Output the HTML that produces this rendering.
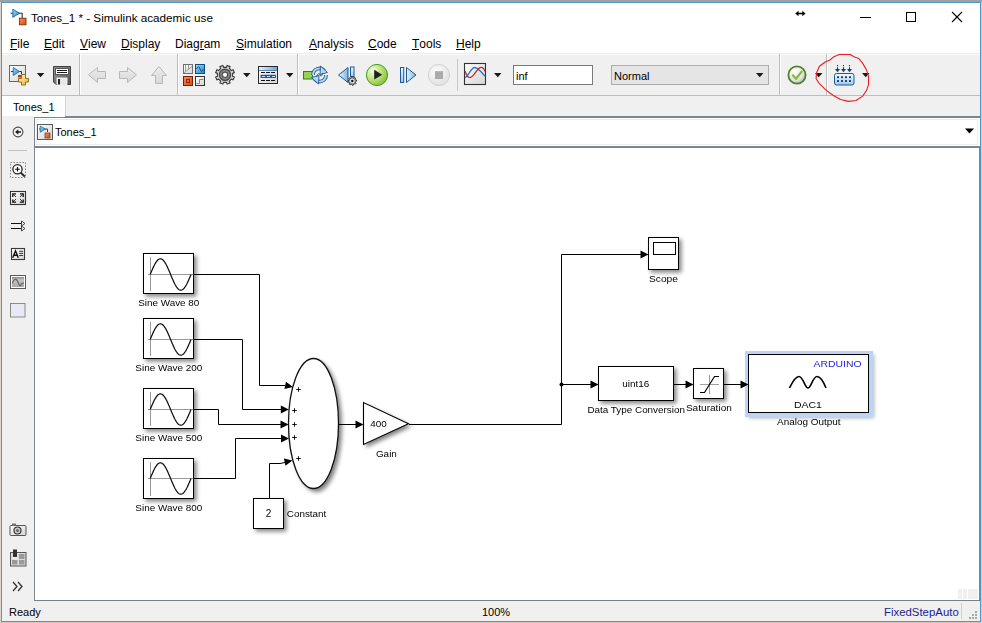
<!DOCTYPE html>
<html><head><meta charset="utf-8">
<style>
*{margin:0;padding:0;box-sizing:border-box}
html,body{width:982px;height:623px;overflow:hidden;background:#a8a8a8;font-family:"Liberation Sans",sans-serif;color:#000}
.a{position:absolute}
.t{position:absolute;white-space:nowrap;line-height:1}
.menu{font-size:12px;color:#000;top:38px}
.menu u{text-decoration:none;border-bottom:1px solid #000;display:inline-block;line-height:10px;height:11px}
</style></head><body>
<!-- background strip -->
<div class="a" style="left:0;top:0;width:982px;height:2px;background:#a0a0a0"></div>
<div class="a" style="left:0;top:2px;width:1px;height:621px;background:#dbd5d2"></div>
<div class="a" style="left:981px;top:2px;width:1px;height:621px;background:#d3ccc8"></div>
<div class="a" style="left:0;top:622px;width:982px;height:1px;background:#cfc8c5"></div>
<!-- window -->
<div class="a" style="left:1px;top:2px;width:980px;height:620px;border:1px solid #4f97c6;background:#fff"></div>
<!-- title -->
<div class="t" style="left:31px;top:12px;font-size:11.7px;color:#000">Tones_1 * - Simulink academic use</div>
<!-- menu -->
<div class="t menu" style="left:10px"><u>F</u>ile</div>
<div class="t menu" style="left:44px"><u>E</u>dit</div>
<div class="t menu" style="left:80px"><u>V</u>iew</div>
<div class="t menu" style="left:121px"><u>D</u>isplay</div>
<div class="t menu" style="left:175px">Diag<u>r</u>am</div>
<div class="t menu" style="left:236px"><u>S</u>imulation</div>
<div class="t menu" style="left:309px"><u>A</u>nalysis</div>
<div class="t menu" style="left:368px"><u>C</u>ode</div>
<div class="t menu" style="left:412px"><u>T</u>ools</div>
<div class="t menu" style="left:456px"><u>H</u>elp</div>
<!-- toolbar -->
<div class="a" style="left:2px;top:53px;width:978px;height:43px;background:#f0f0f0;border-top:1px solid #ececec;border-bottom:1px solid #bdbdbd"></div>
<div class="a" style="left:2px;top:54px;width:978px;height:1px;background:#fafafa"></div>
<!-- separators -->
<div class="a" style="left:79px;top:54px;width:1px;height:41px;background:#bdbdbd"></div>
<div class="a" style="left:80px;top:54px;width:1px;height:41px;background:#fff"></div>
<div class="a" style="left:177px;top:54px;width:1px;height:41px;background:#bdbdbd"></div>
<div class="a" style="left:178px;top:54px;width:1px;height:41px;background:#fff"></div>
<div class="a" style="left:297px;top:54px;width:1px;height:41px;background:#bdbdbd"></div>
<div class="a" style="left:298px;top:54px;width:1px;height:41px;background:#fff"></div>
<div class="a" style="left:457px;top:59px;width:1px;height:32px;background:#c8c8c8"></div>
<div class="a" style="left:779px;top:54px;width:1px;height:41px;background:#bdbdbd"></div>
<div class="a" style="left:780px;top:54px;width:1px;height:41px;background:#fff"></div>
<div class="a" style="left:826px;top:54px;width:1px;height:41px;background:#bdbdbd"></div>
<div class="a" style="left:827px;top:54px;width:1px;height:41px;background:#fff"></div>
<!-- sim time box -->
<div class="a" style="left:513px;top:65px;width:80px;height:20px;background:#fff;border:1px solid #7a7a7a"></div>
<div class="t" style="left:516px;top:71px;font-size:11px">inf</div>
<div class="a" style="left:611px;top:65px;width:158px;height:20px;background:#e5e5e5;border:1px solid #adadad"></div>
<div class="t" style="left:614px;top:71px;font-size:11px">Normal</div>
<!-- tab strip -->
<div class="a" style="left:2px;top:96px;width:978px;height:21px;background:#f0f0f0"></div>
<div class="a" style="left:2px;top:96px;width:63px;height:21px;background:#fff"></div>
<div class="a" style="left:65px;top:96px;width:1px;height:20px;background:#d4d4d4"></div>
<div class="t" style="left:13px;top:102px;font-size:11px">Tones_1</div>
<!-- left toolbar -->
<div class="a" style="left:2px;top:117px;width:32px;height:484px;background:#f0f0f0"></div>
<div class="a" style="left:8px;top:150px;width:19px;height:1px;background:#c0c0c0"></div>
<!-- address bar -->
<div class="a" style="left:34px;top:116px;width:946px;height:32px;background:#7f858c"></div>
<div class="a" style="left:35px;top:118px;width:945px;height:28px;background:#fff"></div>
<div class="a" style="left:36px;top:119px;width:942px;height:26px;border:1px solid #ececec"></div>
<div class="a" style="left:2px;top:116px;width:32px;height:1px;background:#f0f0f0"></div>
<div class="a" style="left:34px;top:116px;width:31px;height:1px;background:#fff"></div>
<div class="t" style="left:55px;top:127px;font-size:11px">Tones_1</div>
<!-- canvas -->
<div class="a" style="left:34px;top:148px;width:946px;height:453px;background:#fff;border-left:1px solid #7f858c;border-right:1px solid #7f858c;border-bottom:1px solid #7a8088"></div>
<div class="a" style="left:958px;top:589px;width:4px;height:10px;background:#f0f0f0"></div>
<div class="a" style="left:963px;top:589px;width:4px;height:10px;background:#f0f0f0"></div>
<div class="a" style="left:968px;top:589px;width:10px;height:10px;background:#f0f0f0"></div>
<!-- status bar -->
<div class="a" style="left:2px;top:601px;width:978px;height:20px;background:#f0f0f0"></div>
<div class="t" style="left:9px;top:607px;font-size:11px">Ready</div>
<div class="t" style="left:482px;top:607px;font-size:11px">100%</div>
<div class="t" style="left:884px;top:607px;font-size:11.4px;color:#1c1c8c">FixedStepAuto</div>
<div class="a" style="left:961px;top:603px;width:1px;height:16px;background:#d0d0d0"></div>

<svg class="a" style="left:0;top:0;font-family:'Liberation Sans',sans-serif" width="982" height="623" viewBox="0 0 982 623">
<defs><filter id="bl" x="-30%" y="-30%" width="160%" height="160%"><feGaussianBlur stdDeviation="2.3"/></filter></defs>
<rect x="145.5" y="255.5" width="51.1" height="41.1" fill="#000" opacity="0.47" filter="url(#bl)"/>
<rect x="143.5" y="253.5" width="50" height="40" fill="#fff" stroke="#000" stroke-width="1"/>
<path d="M150.5 257 V291" stroke="#9a9a9a" stroke-width="1" fill="none"/>
<path d="M148 274.5 H193" stroke="#9a9a9a" stroke-width="1" fill="none"/>
<path d="M150.20 274.50 L150.71 273.27 L151.22 272.04 L151.73 270.83 L152.24 269.65 L152.75 268.49 L153.26 267.37 L153.77 266.30 L154.28 265.27 L154.79 264.30 L155.30 263.40 L155.81 262.56 L156.32 261.80 L156.83 261.11 L157.34 260.51 L157.85 260.00 L158.36 259.57 L158.87 259.23 L159.38 258.99 L159.89 258.85 L160.40 258.80 L160.91 258.85 L161.42 258.99 L161.93 259.23 L162.44 259.57 L162.95 260.00 L163.46 260.51 L163.97 261.11 L164.48 261.80 L164.99 262.56 L165.50 263.40 L166.01 264.30 L166.52 265.27 L167.03 266.30 L167.54 267.37 L168.05 268.49 L168.56 269.65 L169.07 270.83 L169.58 272.04 L170.09 273.27 L170.60 274.50 L171.11 275.73 L171.62 276.96 L172.13 278.17 L172.64 279.35 L173.15 280.51 L173.66 281.63 L174.17 282.70 L174.68 283.73 L175.19 284.70 L175.70 285.60 L176.21 286.44 L176.72 287.20 L177.23 287.89 L177.74 288.49 L178.25 289.00 L178.76 289.43 L179.27 289.77 L179.78 290.01 L180.29 290.15 L180.80 290.20 L181.31 290.15 L181.82 290.01 L182.33 289.77 L182.84 289.43 L183.35 289.00 L183.86 288.49 L184.37 287.89 L184.88 287.20 L185.39 286.44 L185.90 285.60 L186.41 284.70 L186.92 283.73 L187.43 282.70 L187.94 281.63 L188.45 280.51 L188.96 279.35 L189.47 278.17 L189.98 276.96 L190.49 275.73 L191.00 274.50" stroke="#111" stroke-width="1.25" fill="none"/>
<text x="168.8" y="306" font-size="9.9" text-anchor="middle" fill="#000" opacity="0.99" textLength="61" lengthAdjust="spacingAndGlyphs">Sine Wave 80</text>
<rect x="145.5" y="320.5" width="51.1" height="41.1" fill="#000" opacity="0.47" filter="url(#bl)"/>
<rect x="143.5" y="318.5" width="50" height="40" fill="#fff" stroke="#000" stroke-width="1"/>
<path d="M150.5 322 V356" stroke="#9a9a9a" stroke-width="1" fill="none"/>
<path d="M148 339.5 H193" stroke="#9a9a9a" stroke-width="1" fill="none"/>
<path d="M150.20 339.50 L150.71 338.27 L151.22 337.04 L151.73 335.83 L152.24 334.65 L152.75 333.49 L153.26 332.37 L153.77 331.30 L154.28 330.27 L154.79 329.30 L155.30 328.40 L155.81 327.56 L156.32 326.80 L156.83 326.11 L157.34 325.51 L157.85 325.00 L158.36 324.57 L158.87 324.23 L159.38 323.99 L159.89 323.85 L160.40 323.80 L160.91 323.85 L161.42 323.99 L161.93 324.23 L162.44 324.57 L162.95 325.00 L163.46 325.51 L163.97 326.11 L164.48 326.80 L164.99 327.56 L165.50 328.40 L166.01 329.30 L166.52 330.27 L167.03 331.30 L167.54 332.37 L168.05 333.49 L168.56 334.65 L169.07 335.83 L169.58 337.04 L170.09 338.27 L170.60 339.50 L171.11 340.73 L171.62 341.96 L172.13 343.17 L172.64 344.35 L173.15 345.51 L173.66 346.63 L174.17 347.70 L174.68 348.73 L175.19 349.70 L175.70 350.60 L176.21 351.44 L176.72 352.20 L177.23 352.89 L177.74 353.49 L178.25 354.00 L178.76 354.43 L179.27 354.77 L179.78 355.01 L180.29 355.15 L180.80 355.20 L181.31 355.15 L181.82 355.01 L182.33 354.77 L182.84 354.43 L183.35 354.00 L183.86 353.49 L184.37 352.89 L184.88 352.20 L185.39 351.44 L185.90 350.60 L186.41 349.70 L186.92 348.73 L187.43 347.70 L187.94 346.63 L188.45 345.51 L188.96 344.35 L189.47 343.17 L189.98 341.96 L190.49 340.73 L191.00 339.50" stroke="#111" stroke-width="1.25" fill="none"/>
<text x="168.8" y="371" font-size="9.9" text-anchor="middle" fill="#000" opacity="0.99" textLength="67" lengthAdjust="spacingAndGlyphs">Sine Wave 200</text>
<rect x="145.5" y="390.5" width="51.1" height="41.1" fill="#000" opacity="0.47" filter="url(#bl)"/>
<rect x="143.5" y="388.5" width="50" height="40" fill="#fff" stroke="#000" stroke-width="1"/>
<path d="M150.5 392 V426" stroke="#9a9a9a" stroke-width="1" fill="none"/>
<path d="M148 409.5 H193" stroke="#9a9a9a" stroke-width="1" fill="none"/>
<path d="M150.20 409.50 L150.71 408.27 L151.22 407.04 L151.73 405.83 L152.24 404.65 L152.75 403.49 L153.26 402.37 L153.77 401.30 L154.28 400.27 L154.79 399.30 L155.30 398.40 L155.81 397.56 L156.32 396.80 L156.83 396.11 L157.34 395.51 L157.85 395.00 L158.36 394.57 L158.87 394.23 L159.38 393.99 L159.89 393.85 L160.40 393.80 L160.91 393.85 L161.42 393.99 L161.93 394.23 L162.44 394.57 L162.95 395.00 L163.46 395.51 L163.97 396.11 L164.48 396.80 L164.99 397.56 L165.50 398.40 L166.01 399.30 L166.52 400.27 L167.03 401.30 L167.54 402.37 L168.05 403.49 L168.56 404.65 L169.07 405.83 L169.58 407.04 L170.09 408.27 L170.60 409.50 L171.11 410.73 L171.62 411.96 L172.13 413.17 L172.64 414.35 L173.15 415.51 L173.66 416.63 L174.17 417.70 L174.68 418.73 L175.19 419.70 L175.70 420.60 L176.21 421.44 L176.72 422.20 L177.23 422.89 L177.74 423.49 L178.25 424.00 L178.76 424.43 L179.27 424.77 L179.78 425.01 L180.29 425.15 L180.80 425.20 L181.31 425.15 L181.82 425.01 L182.33 424.77 L182.84 424.43 L183.35 424.00 L183.86 423.49 L184.37 422.89 L184.88 422.20 L185.39 421.44 L185.90 420.60 L186.41 419.70 L186.92 418.73 L187.43 417.70 L187.94 416.63 L188.45 415.51 L188.96 414.35 L189.47 413.17 L189.98 411.96 L190.49 410.73 L191.00 409.50" stroke="#111" stroke-width="1.25" fill="none"/>
<text x="168.8" y="441" font-size="9.9" text-anchor="middle" fill="#000" opacity="0.99" textLength="67" lengthAdjust="spacingAndGlyphs">Sine Wave 500</text>
<rect x="145.5" y="460.5" width="51.1" height="41.1" fill="#000" opacity="0.47" filter="url(#bl)"/>
<rect x="143.5" y="458.5" width="50" height="40" fill="#fff" stroke="#000" stroke-width="1"/>
<path d="M150.5 462 V496" stroke="#9a9a9a" stroke-width="1" fill="none"/>
<path d="M148 478.5 H193" stroke="#9a9a9a" stroke-width="1" fill="none"/>
<path d="M150.20 478.50 L150.71 477.27 L151.22 476.04 L151.73 474.83 L152.24 473.65 L152.75 472.49 L153.26 471.37 L153.77 470.30 L154.28 469.27 L154.79 468.30 L155.30 467.40 L155.81 466.56 L156.32 465.80 L156.83 465.11 L157.34 464.51 L157.85 464.00 L158.36 463.57 L158.87 463.23 L159.38 462.99 L159.89 462.85 L160.40 462.80 L160.91 462.85 L161.42 462.99 L161.93 463.23 L162.44 463.57 L162.95 464.00 L163.46 464.51 L163.97 465.11 L164.48 465.80 L164.99 466.56 L165.50 467.40 L166.01 468.30 L166.52 469.27 L167.03 470.30 L167.54 471.37 L168.05 472.49 L168.56 473.65 L169.07 474.83 L169.58 476.04 L170.09 477.27 L170.60 478.50 L171.11 479.73 L171.62 480.96 L172.13 482.17 L172.64 483.35 L173.15 484.51 L173.66 485.63 L174.17 486.70 L174.68 487.73 L175.19 488.70 L175.70 489.60 L176.21 490.44 L176.72 491.20 L177.23 491.89 L177.74 492.49 L178.25 493.00 L178.76 493.43 L179.27 493.77 L179.78 494.01 L180.29 494.15 L180.80 494.20 L181.31 494.15 L181.82 494.01 L182.33 493.77 L182.84 493.43 L183.35 493.00 L183.86 492.49 L184.37 491.89 L184.88 491.20 L185.39 490.44 L185.90 489.60 L186.41 488.70 L186.92 487.73 L187.43 486.70 L187.94 485.63 L188.45 484.51 L188.96 483.35 L189.47 482.17 L189.98 480.96 L190.49 479.73 L191.00 478.50" stroke="#111" stroke-width="1.25" fill="none"/>
<text x="168.8" y="511" font-size="9.9" text-anchor="middle" fill="#000" opacity="0.99" textLength="67" lengthAdjust="spacingAndGlyphs">Sine Wave 800</text>
<path d="M194 274.5 H259.5 V385.5 H285" stroke="#000" stroke-width="1" fill="none"/>
<path d="M194 339.5 H242.5 V409.5 H281" stroke="#000" stroke-width="1" fill="none"/>
<path d="M194 409.5 H218.5 V424.5 H281" stroke="#000" stroke-width="1" fill="none"/>
<path d="M194 478.5 H235.5 V438.5 H281" stroke="#000" stroke-width="1" fill="none"/>
<rect x="255.5" y="500.5" width="31.1" height="31.1" fill="#000" opacity="0.47" filter="url(#bl)"/>
<rect x="253.5" y="498.5" width="30" height="30" fill="#fff" stroke="#000" stroke-width="1"/>
<text x="268.5" y="517" font-size="10" text-anchor="middle" fill="#000" opacity="0.99">2</text>
<text x="286.8" y="517" font-size="9.9" text-anchor="start" fill="#000" opacity="0.99" textLength="39.5" lengthAdjust="spacingAndGlyphs">Constant</text>
<path d="M269.5 498 V463.5 H280 L285 462.5" stroke="#000" stroke-width="1" fill="none"/>
<ellipse cx="316.5" cy="426.5" rx="25.5" ry="65.5" fill="#000" opacity="0.5" filter="url(#bl)"/>
<ellipse cx="313.5" cy="423.5" rx="25" ry="65" fill="#fff" stroke="#111" stroke-width="1.3"/>
<path d="M293 387 L285 383.25 L285 390.75 Z" fill="#000" transform="rotate(12 293 387)"/>
<path d="M288.8 409.5 L280.8 405.5 L280.8 413.5 Z" fill="#000" transform="rotate(0 288.8 409.5)"/>
<path d="M288.5 424.5 L280.5 420.5 L280.5 428.5 Z" fill="#000" transform="rotate(0 288.5 424.5)"/>
<path d="M289 438.5 L281 434.5 L281 442.5 Z" fill="#000" transform="rotate(0 289 438.5)"/>
<path d="M292.5 460.5 L284.5 456.75 L284.5 464.25 Z" fill="#000" transform="rotate(-12 292.5 460.5)"/>
<path d="M296.2 389.5 H300.8 M298.5 387.2 V391.8" stroke="#000" stroke-width="0.9" fill="none"/>
<path d="M292.2 410.5 H296.8 M294.5 408.2 V412.8" stroke="#000" stroke-width="0.9" fill="none"/>
<path d="M292.2 424.5 H296.8 M294.5 422.2 V426.8" stroke="#000" stroke-width="0.9" fill="none"/>
<path d="M292.2 437.5 H296.8 M294.5 435.2 V439.8" stroke="#000" stroke-width="0.9" fill="none"/>
<path d="M296.2 458.5 H300.8 M298.5 456.2 V460.8" stroke="#000" stroke-width="0.9" fill="none"/>
<path d="M339 424.5 H357" stroke="#000" stroke-width="1" fill="none"/>
<path d="M363.5 424.5 L355.5 420.5 L355.5 428.5 Z" fill="#000" transform="rotate(0 363.5 424.5)"/>
<path d="M366 405 L366 447.5 L411.5 426.5 Z" fill="#000" opacity="0.5" filter="url(#bl)"/>
<path d="M363.5 402.5 L363.5 444.5 L408.5 423.8 Z" fill="#fff" stroke="#000" stroke-width="1.1" stroke-linejoin="miter"/>
<text x="378.6" y="427" font-size="9.9" text-anchor="middle" fill="#000" opacity="0.99" textLength="16.5" lengthAdjust="spacingAndGlyphs">400</text>
<text x="386.4" y="456.6" font-size="9.9" text-anchor="middle" fill="#000" opacity="0.99" textLength="21" lengthAdjust="spacingAndGlyphs">Gain</text>
<path d="M409 424.5 H561.5 V254.5 H642" stroke="#000" stroke-width="1" fill="none"/>
<path d="M648.5 254.5 L640.5 250.5 L640.5 258.5 Z" fill="#000" transform="rotate(0 648.5 254.5)"/>
<path d="M561.5 384.5 H592" stroke="#000" stroke-width="1" fill="none"/>
<path d="M598.5 384.5 L590.5 380.5 L590.5 388.5 Z" fill="#000" transform="rotate(0 598.5 384.5)"/>
<circle cx="561.5" cy="384.5" r="2" fill="#000"/>
<rect x="650.5" y="239.5" width="31.1" height="33.1" fill="#000" opacity="0.47" filter="url(#bl)"/>
<rect x="648.5" y="237.5" width="30" height="32" fill="#fff" stroke="#000" stroke-width="1"/>
<rect x="653.5" y="242.5" width="22" height="12" fill="none" stroke="#000" stroke-width="1"/>
<text x="663.5" y="281.6" font-size="9.9" text-anchor="middle" fill="#000" opacity="0.99" textLength="29" lengthAdjust="spacingAndGlyphs">Scope</text>
<rect x="600.5" y="368.5" width="76.1" height="35.1" fill="#000" opacity="0.47" filter="url(#bl)"/>
<rect x="598.5" y="366.5" width="75" height="34" fill="#fff" stroke="#000" stroke-width="1"/>
<text x="635.8" y="386.8" font-size="9.9" text-anchor="middle" fill="#000" opacity="0.99" textLength="27" lengthAdjust="spacingAndGlyphs">uint16</text>
<text x="636.2" y="413" font-size="9.9" text-anchor="middle" fill="#000" opacity="0.99" textLength="97.5" lengthAdjust="spacingAndGlyphs">Data Type Conversion</text>
<path d="M674 384.5 H687" stroke="#000" stroke-width="1" fill="none"/>
<path d="M693.5 384.5 L685.5 380.5 L685.5 388.5 Z" fill="#000" transform="rotate(0 693.5 384.5)"/>
<rect x="695.5" y="370.5" width="31.1" height="31.1" fill="#000" opacity="0.47" filter="url(#bl)"/>
<rect x="693.5" y="368.5" width="30" height="30" fill="#fff" stroke="#000" stroke-width="1"/>
<path d="M709.5 375 V394 M700 384.5 H719" stroke="#a0a0a0" stroke-width="1" fill="none"/>
<path d="M700 392.5 H704.5 L714.5 376.5 H719" stroke="#000" stroke-width="1.2" fill="none"/>
<text x="708.9" y="411" font-size="9.9" text-anchor="middle" fill="#000" opacity="0.99" textLength="46" lengthAdjust="spacingAndGlyphs">Saturation</text>
<path d="M724 384.5 H742" stroke="#000" stroke-width="1" fill="none"/>
<rect x="748" y="354" width="126" height="64" fill="#000" opacity="0.3" filter="url(#bl)"/>
<rect x="745" y="351" width="128" height="66" fill="#bcd5f3"/>
<rect x="748.5" y="354.5" width="120" height="58" fill="#fff" stroke="#000" stroke-width="1"/>
<path d="M748.5 384.5 L740.5 380.5 L740.5 388.5 Z" fill="#000" transform="rotate(0 748.5 384.5)"/>
<text x="837.6" y="366.8" font-size="9.9" text-anchor="middle" fill="#2020e0" opacity="0.99" textLength="48" lengthAdjust="spacingAndGlyphs">ARDUINO</text>
<path d="M789.5 388 C792 383 795 376.5 799 376.5 C803 376.5 805 388 808 388 C811 388 813 376.5 817 376.5 C821 376.5 824 383 826 388" stroke="#000" stroke-width="1.6" fill="none"/>
<text x="807.9" y="407.7" font-size="9.9" text-anchor="middle" fill="#000" opacity="0.99" textLength="28" lengthAdjust="spacingAndGlyphs">DAC1</text>
<text x="808.8" y="424.8" font-size="9.9" text-anchor="middle" fill="#000" opacity="0.99" textLength="63.5" lengthAdjust="spacingAndGlyphs">Analog Output</text>
<defs>
<linearGradient id="gW" x1="0" y1="0" x2="1" y2="1"><stop offset="0" stop-color="#ffffff"/><stop offset="1" stop-color="#d4d4d4"/></linearGradient>
<linearGradient id="gArr" x1="0" y1="0" x2="0" y2="1"><stop offset="0" stop-color="#ececec"/><stop offset="1" stop-color="#d8d8d8"/></linearGradient>
<linearGradient id="gY" x1="0" y1="0" x2="1" y2="1"><stop offset="0" stop-color="#fffbd0"/><stop offset="1" stop-color="#e8b020"/></linearGradient>
<linearGradient id="gBlue" x1="0" y1="0" x2="1" y2="1"><stop offset="0" stop-color="#9fdcf8"/><stop offset="1" stop-color="#1f86c8"/></linearGradient>
<linearGradient id="gLB" x1="0" y1="0" x2="1" y2="0"><stop offset="0" stop-color="#e8f4fc"/><stop offset="1" stop-color="#78b4e0"/></linearGradient>
<linearGradient id="gLB2" x1="0" y1="0" x2="0" y2="1"><stop offset="0" stop-color="#f4faff"/><stop offset="1" stop-color="#9cc8ec"/></linearGradient>
<radialGradient id="gGreen" cx="0.3" cy="0.3" r="0.8"><stop offset="0" stop-color="#f4fde8"/><stop offset="0.55" stop-color="#b8e070"/><stop offset="1" stop-color="#7cbc38"/></radialGradient>
<radialGradient id="gGray" cx="0.35" cy="0.3" r="0.8"><stop offset="0" stop-color="#fbfbfb"/><stop offset="1" stop-color="#dedede"/></radialGradient>
<radialGradient id="gChk" cx="0.35" cy="0.3" r="0.85"><stop offset="0" stop-color="#ffffff"/><stop offset="0.6" stop-color="#e4e4e4"/><stop offset="1" stop-color="#a8a8a8"/></radialGradient>
<linearGradient id="gOr" x1="0" y1="0" x2="1" y2="1"><stop offset="0" stop-color="#f89060"/><stop offset="1" stop-color="#d84810"/></linearGradient>
<linearGradient id="gSave" x1="0" y1="0" x2="1" y2="1"><stop offset="0" stop-color="#9a9a9a"/><stop offset="1" stop-color="#505050"/></linearGradient>
<linearGradient id="gTitle" x1="0" y1="0" x2="1" y2="0"><stop offset="0" stop-color="#e4f2fc"/><stop offset="1" stop-color="#6aa8dc"/></linearGradient>
</defs>
<g transform="translate(9.5 8.3) scale(1.1)"><path d="M1 4.5 H11.5 V9" stroke="#333" stroke-width="1" fill="none"/><path d="M3 0.8 L9.2 4.5 L3 8.2 Z" fill="url(#gBlue)" stroke="#1a5f9e" stroke-width="0.8"/><rect x="9" y="9" width="6" height="6" fill="url(#gOr)" stroke="#8a2a00" stroke-width="0.8"/></g>
<path d="M860 17.5 H871" stroke="#000" stroke-width="1"/>
<rect x="906.5" y="12.5" width="9" height="9" fill="none" stroke="#000" stroke-width="1"/>
<path d="M952 12 L962 22 M962 12 L952 22" stroke="#000" stroke-width="1.1"/>
<path d="M797 13.5 H804" stroke="#000" stroke-width="1.5"/><path d="M795.3 13.5 L798.5 10.8 V16.2 Z M805.5 13.5 L802.3 10.8 V16.2 Z" fill="#000"/>
<rect x="9.5" y="65.5" width="16" height="16" fill="url(#gW)" stroke="#666" stroke-width="1"/>
<path d="M11 71.5 H21.5 V74" stroke="#333" stroke-width="1" fill="none"/>
<path d="M13.2 67.5 L19.5 71.5 L13.2 75.5 Z" fill="url(#gBlue)" stroke="#1a5f9e" stroke-width="0.8"/>
<rect x="18" y="75" width="3.5" height="2.5" fill="#c83010"/>
<path d="M21.5 74.5 H25.5 V78.5 H28.5 V82 H25.5 V85 H21.5 V82 H18.5 V78.5 H21.5 Z" fill="url(#gY)" stroke="#8a6410" stroke-width="0.9"/>
<path d="M36.8 73 H44.3 L40.55 77.2 Z" fill="#1a1a1a"/>
<path d="M53.5 66.5 H70.5 V84.5 H56 L53.5 82 Z" fill="url(#gSave)" stroke="#404040" stroke-width="1"/>
<rect x="55.5" y="68.5" width="13" height="6" fill="#fff" stroke="#555" stroke-width="1"/>
<path d="M57 70.5 H67 M57 72.5 H67" stroke="#000" stroke-width="0.9"/>
<rect x="57" y="78" width="10" height="6.5" fill="#e6e6e6" stroke="#fff" stroke-width="0.8"/>
<rect x="58" y="79" width="2" height="5.5" fill="#222"/>
<path d="M88.5 74.8 L97.5 67.5 V71.5 H105.5 V78.5 H97.5 V82.5 Z" fill="url(#gArr)" stroke="#b8b8b8" stroke-width="1"/>
<path d="M136.5 74.8 L127.5 67.5 V71.5 H119.5 V78.5 H127.5 V82.5 Z" fill="url(#gArr)" stroke="#b8b8b8" stroke-width="1"/>
<path d="M159 66.5 L166.5 75.5 H162.5 V83.5 H155.5 V75.5 H151.5 Z" fill="url(#gArr)" stroke="#b8b8b8" stroke-width="1"/>
<rect x="183.5" y="64.5" width="9" height="9" fill="url(#gW)" stroke="#707070" stroke-width="1"/>
<path d="M185.5 65 V71.5 M188.5 65 V70 M184 73 L192 66.5" stroke="#8a8a8a" stroke-width="0.8" fill="none"/>
<rect x="195.5" y="64.5" width="9" height="9" fill="url(#gBlue)" stroke="#0e4f8a" stroke-width="1"/>
<path d="M196.5 69 C198 66 199 66 200 69 C201 72 202 72 203.5 69" stroke="#0a3a6a" stroke-width="0.9" fill="none"/>
<rect x="183.5" y="76.5" width="9" height="9" fill="url(#gOr)" stroke="#7a2000" stroke-width="1"/>
<rect x="186.5" y="79.5" width="3" height="3" fill="none" stroke="#8a2a00" stroke-width="1"/>
<rect x="195.5" y="76.5" width="9" height="9" fill="url(#gW)" stroke="#333" stroke-width="1"/>
<path d="M196.5 83.5 H199.5 V79.5 H203.5" stroke="#777" stroke-width="0.9" fill="none"/>
<path d="M232.60 74.80 L232.48 76.17 L234.35 76.97 L233.15 79.88 L231.25 79.12 L230.37 80.17 L229.32 81.05 L230.08 82.95 L227.17 84.15 L226.37 82.28 L225.00 82.40 L223.63 82.28 L222.83 84.15 L219.92 82.95 L220.68 81.05 L219.63 80.17 L218.75 79.12 L216.85 79.88 L215.65 76.97 L217.52 76.17 L217.40 74.80 L217.52 73.43 L215.65 72.63 L216.85 69.72 L218.75 70.48 L219.63 69.43 L220.68 68.55 L219.92 66.65 L222.83 65.45 L223.63 67.32 L225.00 67.20 L226.37 67.32 L227.17 65.45 L230.08 66.65 L229.32 68.55 L230.37 69.43 L231.25 70.48 L233.15 69.72 L234.35 72.63 L232.48 73.43 Z" fill="#d4d4d4" stroke="#3a3a3a" stroke-width="1.1" stroke-linejoin="miter"/>
<circle cx="225" cy="74.8" r="5.6" fill="#8a8a8a" stroke="#4a4a4a" stroke-width="1.4"/>
<circle cx="225" cy="74.8" r="3.3" fill="#505050"/>
<circle cx="225" cy="74.8" r="2.1" fill="#fff"/>
<path d="M243 73 H250.5 L246.75 77.2 Z" fill="#1a1a1a"/>
<rect x="258.5" y="66.5" width="19" height="17" fill="url(#gW)" stroke="#2a2a2a" stroke-width="1"/>
<rect x="259" y="67" width="18" height="3" fill="url(#gTitle)"/>
<path d="M259 70.5 H277" stroke="#3a6a9a" stroke-width="0.8"/>
<path d="M261 72.5 H265 M266 72.5 H270 M271 72.5 H275 M261 80.5 H265 M266 80.5 H270 M271 80.5 H275" stroke="#111" stroke-width="1.1"/>
<rect x="260.5" y="74.8" width="15.5" height="3.3" rx="0.8" fill="#1e5a9a"/>
<path d="M262 76.5 H265 M267 76.5 H270 M272 76.5 H275" stroke="#d8ecff" stroke-width="0.9"/>
<path d="M286 73 H293.5 L289.75 77.2 Z" fill="#1a1a1a"/>
<rect x="303.5" y="71.5" width="9" height="7.5" fill="#98d050" stroke="#3a7a20" stroke-width="1"/>
<path d="M313 75 A6.5 6.5 0 0 1 324.5 70.8" stroke="#1f5a94" stroke-width="3.6" fill="none"/>
<path d="M313 75 A6.5 6.5 0 0 1 324.5 70.8" stroke="#b4d8f4" stroke-width="1.9" fill="none"/>
<path d="M326 75 A6.5 6.5 0 0 1 314.5 79.2" stroke="#1f5a94" stroke-width="3.6" fill="none"/>
<path d="M326 75 A6.5 6.5 0 0 1 314.5 79.2" stroke="#b4d8f4" stroke-width="1.9" fill="none"/>
<path d="M320.5 66 L327.5 72.5 L320 74.5 Z" fill="#b4d8f4" stroke="#1f5a94" stroke-width="0.9" stroke-linejoin="round"/>
<path d="M318.5 84 L311.5 77.5 L319 75.5 Z" fill="#b4d8f4" stroke="#1f5a94" stroke-width="0.9" stroke-linejoin="round"/>
<path d="M316.5 77 C317.5 73.5 319 73 320 75 C321 77 322 76.5 322.5 73" stroke="#1f5a94" stroke-width="1" fill="none"/>
<path d="M338.5 75 L348 67.5 V82.5 Z" fill="url(#gLB)" stroke="#1f5a94" stroke-width="1"/>
<rect x="350.5" y="67" width="3.5" height="9.5" fill="url(#gLB2)" stroke="#1f5a94" stroke-width="1"/>
<path d="M356.62 80.14 L356.70 81.00 L355.54 81.64 L355.35 82.26 L355.96 83.44 L355.41 84.11 L354.13 83.74 L353.56 84.05 L353.16 85.32 L352.30 85.40 L351.66 84.24 L351.04 84.05 L349.86 84.66 L349.19 84.11 L349.56 82.83 L349.25 82.26 L347.98 81.86 L347.90 81.00 L349.06 80.36 L349.25 79.74 L348.64 78.56 L349.19 77.89 L350.47 78.26 L351.04 77.95 L351.44 76.68 L352.30 76.60 L352.94 77.76 L353.56 77.95 L354.74 77.34 L355.41 77.89 L355.04 79.17 L355.35 79.74 Z" fill="#a0a0a0" stroke="#3a3a3a" stroke-width="1" stroke-linejoin="round"/>
<circle cx="352.3" cy="81" r="2.2" fill="#e8e8e8"/>
<circle cx="352.3" cy="81" r="1.2" fill="#111"/>
<circle cx="377" cy="75" r="10.6" fill="url(#gGreen)" stroke="#4a9a28" stroke-width="1"/>
<path d="M374.2 69.8 L382.2 74.8 L374.2 79.6 Z" fill="#1f1f1f"/>
<rect x="400.5" y="67.5" width="3.2" height="15" fill="url(#gLB2)" stroke="#1f5a94" stroke-width="1"/>
<path d="M406.5 67.5 L416 75 L406.5 82.5 Z" fill="url(#gLB)" stroke="#1f5a94" stroke-width="1"/>
<circle cx="439" cy="75" r="10.6" fill="url(#gGray)" stroke="#d2d2d2" stroke-width="1"/>
<rect x="435" y="71.2" width="8" height="7.8" fill="#ababab"/>
<rect x="464.5" y="63.5" width="21" height="21" fill="url(#gW)" stroke="#333" stroke-width="1.1"/>
<path d="M465 77.5 C468 77 471 67.5 474.6 67.5 C478 67.5 482 73 485 76" stroke="#1f78c8" stroke-width="1.3" fill="none"/>
<path d="M465 71 C466.5 76 468 77.6 470 77.6 C474 77.6 477 67.3 481 67.3 C483 67.3 484.5 69.5 485 71.5" stroke="#c82828" stroke-width="1.3" fill="none"/>
<path d="M494 73 H501.5 L497.75 77.2 Z" fill="#1a1a1a"/>
<path d="M756 73 H763.5 L759.75 77.2 Z" fill="#1a1a1a"/>
<circle cx="797" cy="75" r="8.6" fill="url(#gChk)" stroke="#52802a" stroke-width="1.8"/>
<path d="M792.8 75.3 L796 78.8 L801.7 71.6" stroke="#8ab83c" stroke-width="2.2" fill="none" stroke-linecap="round"/>
<path d="M815 73 H822.5 L818.75 77.2 Z" fill="#1a1a1a"/>
<path d="M837.5 65 V66.2 M837.5 67.2 V69" stroke="#0d3f78" stroke-width="1.1"/>
<path d="M835.0 69 H840.0 L837.5 72.3 Z" fill="#0d3f78"/>
<path d="M843.5 65 V66.2 M843.5 67.2 V69" stroke="#0d3f78" stroke-width="1.1"/>
<path d="M841.0 69 H846.0 L843.5 72.3 Z" fill="#0d3f78"/>
<path d="M849.5 65 V66.2 M849.5 67.2 V69" stroke="#0d3f78" stroke-width="1.1"/>
<path d="M847.0 69 H852.0 L849.5 72.3 Z" fill="#0d3f78"/>
<rect x="834.5" y="73.5" width="19.5" height="11.5" rx="2" fill="url(#gLB2)" stroke="#1f5a94" stroke-width="1"/>
<rect x="837.1" y="76.3" width="1.8" height="1.8" fill="#0a2a5a"/>
<rect x="841.1" y="76.3" width="1.8" height="1.8" fill="#0a2a5a"/>
<rect x="845.1" y="76.3" width="1.8" height="1.8" fill="#0a2a5a"/>
<rect x="849.1" y="76.3" width="1.8" height="1.8" fill="#0a2a5a"/>
<rect x="837.1" y="80.1" width="1.8" height="1.8" fill="#0a2a5a"/>
<rect x="841.1" y="80.1" width="1.8" height="1.8" fill="#0a2a5a"/>
<rect x="845.1" y="80.1" width="1.8" height="1.8" fill="#0a2a5a"/>
<rect x="849.1" y="80.1" width="1.8" height="1.8" fill="#0a2a5a"/>
<path d="M862 73 H869.5 L865.75 77.2 Z" fill="#1a1a1a"/>
<path d="M839.2 54.5 L850.2 54.5 L854 56.7 L858.9 58.6 L862.7 63.4 L866.6 70.1 L868.5 75.9 L868.5 84.6 L866.6 90.3 L862.7 96.1 L856 100.5 L848.3 101.4 L840.6 99.5 L832.9 95.2 L825.2 89.4 L819.4 83.6 L816.1 78.8 L816.5 73 L819.4 66.3 L825.2 62 L830 60 L833.9 56.7 Z" fill="none" stroke="#ee1c24" stroke-width="1.1" stroke-linejoin="round"/>
<rect x="37.5" y="124.5" width="15" height="15" fill="url(#gW)" stroke="#5a5a5a" stroke-width="1"/>
<path d="M39 129 H47.5 V132" stroke="#333" stroke-width="0.9" fill="none"/>
<path d="M40.2 126 L45.5 129 L40.2 132.3 Z" fill="url(#gBlue)" stroke="#1a5f9e" stroke-width="0.7"/>
<rect x="45" y="133" width="5" height="5" fill="url(#gOr)" stroke="#8a2a00" stroke-width="0.7"/>
<path d="M965 128.5 H974 L969.5 133.5 Z" fill="#000"/>
<circle cx="18" cy="132" r="4.9" fill="#f6f6f6" stroke="#4a4a4a" stroke-width="1.1"/>
<path d="M17.5 132 H21" stroke="#222" stroke-width="1.6"/><path d="M15 132 L18.3 129.2 V134.8 Z" fill="#222"/>
<rect x="10.5" y="162.5" width="15" height="15" fill="none" stroke="#777" stroke-width="0.9" stroke-dasharray="1.5 1.5"/>
<circle cx="17.5" cy="169.3" r="4.6" fill="#fff" stroke="#222" stroke-width="1.3"/>
<path d="M15.2 169.3 H19.8 M17.5 167 V171.6" stroke="#000" stroke-width="1.1"/>
<path d="M20.8 172.6 L24.8 176.6" stroke="#222" stroke-width="2"/>
<rect x="10.5" y="191.5" width="15" height="13" fill="url(#gW)" stroke="#333" stroke-width="1.1"/>
<path d="M12.8 197 V193.8 H16 M23.2 197 V193.8 H20 M12.8 199.5 V202.2 H16 M23.2 199.5 V202.2 H20" stroke="#111" stroke-width="1.3" fill="none"/>
<path d="M13.3 194.3 L16 197 M22.7 194.3 L20 197 M13.3 201.7 L16 199 M22.7 201.7 L20 199" stroke="#222" stroke-width="0.9" fill="none"/>
<path d="M11 223.5 H21.5 M11 228.5 H21.5" stroke="#111" stroke-width="1.1" fill="none"/>
<path d="M21.5 221 L25 223.5 L21.5 226 Z M21.5 226 L25 228.5 L21.5 231 Z" stroke="#333" stroke-width="0.9" fill="#f0f0f0"/>
<rect x="11.5" y="248.5" width="13" height="11" fill="url(#gW)" stroke="#3a3a3a" stroke-width="1.1"/>
<path d="M12.7 257.8 L15.5 250.8 L18.3 257.8 M13.8 255.2 H17.2" stroke="#111" stroke-width="1.4" fill="none"/>
<path d="M19.2 251.3 H23 M19.2 253.4 H23 M19.2 255.5 H23" stroke="#222" stroke-width="0.9"/>
<linearGradient id="gImg" x1="0" y1="0" x2="0" y2="1"><stop offset="0" stop-color="#8a8a8a"/><stop offset="0.3" stop-color="#c4c4c4"/><stop offset="1" stop-color="#a8a8a8"/></linearGradient>
<rect x="10.5" y="275.5" width="15" height="13" fill="#fafafa" stroke="#5a5a5a" stroke-width="1"/>
<rect x="12" y="277" width="12" height="10" fill="url(#gImg)"/>
<path d="M12.3 283.5 C13.5 279 16 278 17.8 281.5 C18.8 283.8 19.5 286.5 20.5 285.5 C21.5 284 22.5 282.5 23.8 283.5" stroke="#666" stroke-width="1.2" fill="none"/>
<rect x="10.5" y="303.5" width="14.5" height="13.5" fill="#e8e8f6" stroke="#8a8a8a" stroke-width="1"/>
<rect x="10" y="525.5" width="16" height="10" rx="1" fill="url(#gW)" stroke="#555" stroke-width="1"/>
<rect x="12" y="523.5" width="4" height="2" fill="#777"/>
<circle cx="17.5" cy="530.5" r="3.5" fill="#ccc" stroke="#333" stroke-width="1.2"/>
<circle cx="17.5" cy="530.5" r="1.5" fill="#666"/>
<rect x="10.5" y="552.5" width="15.5" height="13.5" fill="#dcdcdc" stroke="#555" stroke-width="1"/>
<rect x="19" y="554" width="5.5" height="5" fill="#9a9a9a"/><rect x="19" y="560" width="5.5" height="4.5" fill="#9a9a9a"/><rect x="12" y="560" width="5.5" height="4.5" fill="#9a9a9a"/>
<rect x="13" y="549.5" width="4" height="8" fill="#333"/><rect x="12.5" y="557" width="5" height="2.5" fill="#eee"/>
<path d="M13 582 L17 586.5 L13 591 M18 582 L22 586.5 L18 591" stroke="#333" stroke-width="1.3" fill="none"/>
<rect x="975" y="611" width="2" height="2" fill="#a8a8a8"/>
<rect x="972" y="614" width="2" height="2" fill="#a8a8a8"/>
<rect x="975" y="614" width="2" height="2" fill="#a8a8a8"/>
<rect x="969" y="617" width="2" height="2" fill="#a8a8a8"/>
<rect x="972" y="617" width="2" height="2" fill="#a8a8a8"/>
<rect x="975" y="617" width="2" height="2" fill="#a8a8a8"/>
</svg>
</body></html>
